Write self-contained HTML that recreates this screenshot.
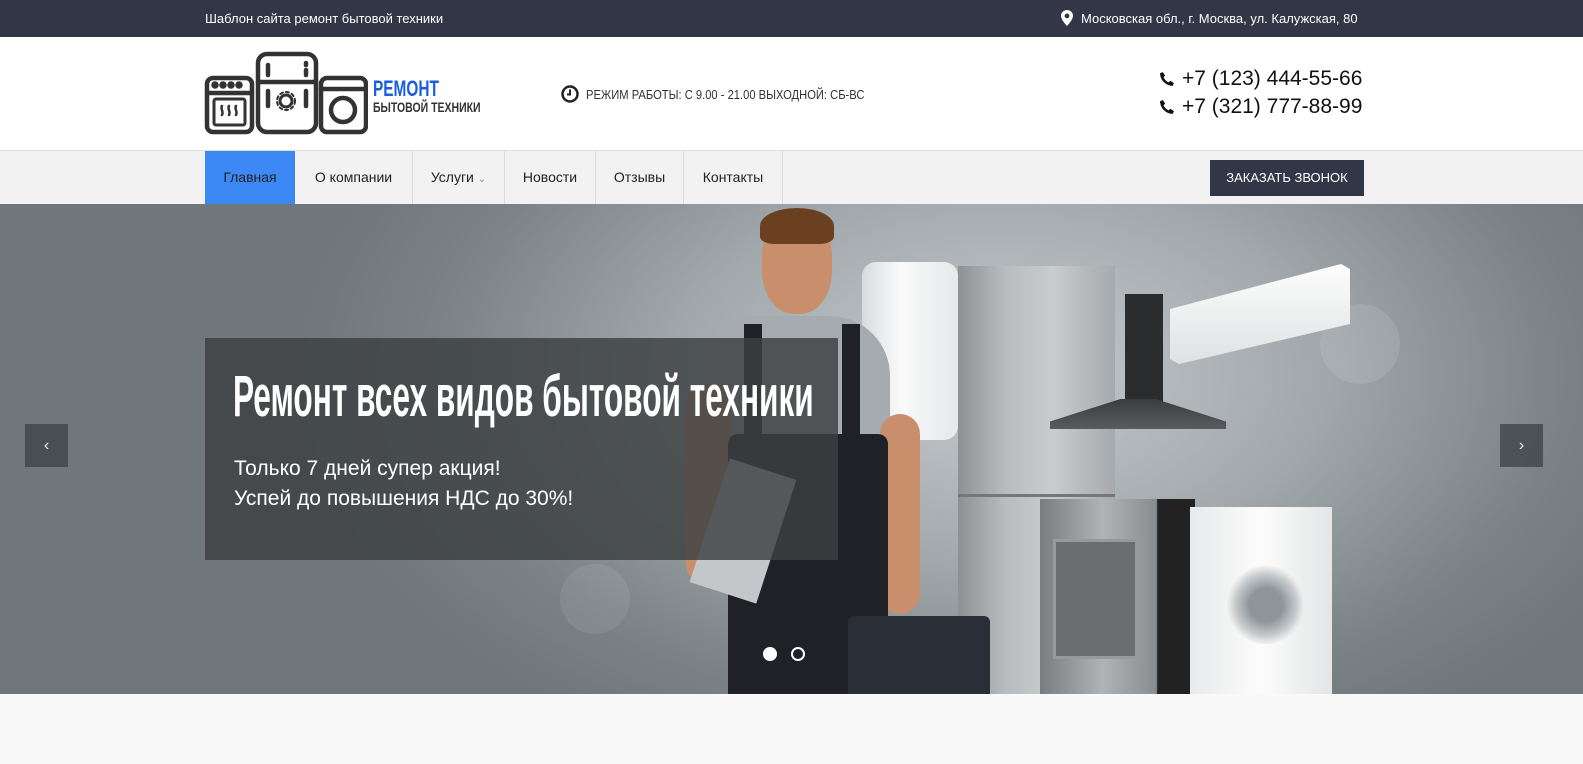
<!DOCTYPE html>
<html><head><meta charset="utf-8"><style>
*{margin:0;padding:0;box-sizing:border-box}
body{width:1583px;height:764px;overflow:hidden;background:#f9f9f9;font-family:"Liberation Sans","DejaVu Sans",sans-serif;position:relative}
.abs{position:absolute}
.top{left:0;top:0;width:1583px;height:37px;background:#333646;color:#fff;font-size:13px}
.hdr{left:0;top:37px;width:1583px;height:113px;background:#fff}
.nav{left:0;top:150px;width:1583px;height:54px;background:#f2f2f2;border-top:1px solid #ddd}
.nav a{position:absolute;top:0;height:53px;line-height:53px;font-size:14px;color:#222;text-align:center;border-right:1px solid #ddd}
.hero{left:0;top:204px;width:1583px;height:490px;overflow:hidden;background:radial-gradient(ellipse 700px 420px at 1000px 170px,#c5cacd 0%,#a2a9ad 45%,#7b8387 80%,#6f777b 100%)}
.cond{display:inline-block;transform:scaleX(.72);transform-origin:left center;white-space:nowrap}
</style></head><body>
<div class="abs top">
<div class="abs" style="left:205px;top:11px">Шаблон сайта ремонт бытовой техники</div>
<svg class="abs" style="left:1061px;top:10px" width="12" height="16" viewBox="0 0 12 16"><path d="M6 0C2.7 0 0 2.6 0 5.8 0 10 6 16 6 16s6-6 6-10.2C12 2.6 9.3 0 6 0zm0 8.3a2.4 2.4 0 110-4.8 2.4 2.4 0 010 4.8z" fill="#fff"/></svg>
<div class="abs" style="left:1081px;top:11px">Московская обл., г. Москва, ул. Калужская, 80</div>
</div>
<div class="abs hdr">
<svg class="abs" style="left:204px;top:14px" width="164" height="84" viewBox="0 0 164 84" fill="none" stroke="#333" stroke-width="4.5" stroke-linecap="round">
<rect x="3" y="27" width="45" height="54" rx="6"/><line x1="3" y1="42" x2="48" y2="42"/>
<circle cx="11" cy="34" r="1.5" fill="#333"/><circle cx="19" cy="34" r="1.5" fill="#333"/><circle cx="27" cy="34" r="1.5" fill="#333"/><circle cx="35" cy="34" r="1.5" fill="#333"/>
<rect x="10" y="48" width="31" height="26" rx="2" stroke-width="3"/>
<path d="M18 55c-2 3 2 5 0 9M25 55c-2 3 2 5 0 9M32 55c-2 3 2 5 0 9" stroke-width="2.5"/>
<rect x="54" y="3" width="58" height="78" rx="9"/><line x1="54" y1="31" x2="112" y2="31"/>
<line x1="64" y1="14" x2="64" y2="24"/><line x1="102" y1="12" x2="102" y2="14"/><line x1="102" y1="19" x2="102" y2="24"/><line x1="64" y1="40" x2="64" y2="55"/><line x1="102" y1="40" x2="102" y2="55"/>
<circle cx="82" cy="50" r="6" stroke-width="3"/><circle cx="82" cy="50" r="9" stroke-width="2" stroke-dasharray="3 3"/>
<rect x="117" y="27" width="45" height="54" rx="6"/><line x1="117" y1="38" x2="162" y2="38"/>
<circle cx="139" cy="59" r="12"/>
</svg>
<div class="abs" style="left:373px;top:39px;color:#1a5ee0;font-size:22px;font-weight:bold"><span class="cond" style="transform:scaleX(.7)">РЕМОНТ</span></div>
<div class="abs" style="left:373px;top:62px;color:#333;font-size:14px"><span class="cond" style="transform:scaleX(.75);font-weight:bold">БЫТОВОЙ ТЕХНИКИ</span></div>
<svg class="abs" style="left:561px;top:48px" width="18" height="18" viewBox="0 0 18 18"><circle cx="9" cy="9" r="7.5" fill="none" stroke="#222" stroke-width="2.5"/><path d="M9 4.5V9.5H6" stroke="#222" stroke-width="2" fill="none"/></svg>
<div class="abs" style="left:586px;top:50px;font-size:13px;color:#333"><span class="cond" style="transform:scaleX(.86)">РЕЖИМ РАБОТЫ: С 9.00 - 21.00 ВЫХОДНОЙ: СБ-ВС</span></div>
<svg class="abs" style="left:1159px;top:34px" width="17" height="17" viewBox="0 0 16 16"><path d="M3.6 1l2.2 3.3-1.5 1.6c.9 2.1 2.6 3.9 4.8 4.8l1.6-1.5L14 11.4l-1 2.6c-6.5 0-12-5.5-12-12z" fill="#111"/></svg>
<svg class="abs" style="left:1159px;top:62px" width="17" height="17" viewBox="0 0 16 16"><path d="M3.6 1l2.2 3.3-1.5 1.6c.9 2.1 2.6 3.9 4.8 4.8l1.6-1.5L14 11.4l-1 2.6c-6.5 0-12-5.5-12-12z" fill="#111"/></svg>
<div class="abs" style="left:1182px;top:30px;font-size:21px;color:#111">+7 (123) 444-55-66</div>
<div class="abs" style="left:1182px;top:58px;font-size:21px;color:#111">+7 (321) 777-88-99</div>
</div>
<div class="abs nav">
<a style="left:205px;width:90px;background:#3c89f5;border:none;color:#222">Главная</a>
<a style="left:295px;width:118px">О компании</a>
<a style="left:413px;width:92px">Услуги <span style="font-size:10px;color:#888">&#8964;</span></a>
<a style="left:505px;width:91px">Новости</a>
<a style="left:596px;width:88px">Отзывы</a>
<a style="left:684px;width:99px">Контакты</a>
<div class="abs" style="left:1210px;top:9px;width:154px;height:36px;background:#333646;color:#fff;font-size:13px;line-height:36px;text-align:center">ЗАКАЗАТЬ ЗВОНОК</div>
</div>
<div class="abs hero">
<div class="abs" style="left:560px;top:360px;width:70px;height:70px;border-radius:50%;background:rgba(255,255,255,.08)"></div>
<div class="abs" style="left:1320px;top:100px;width:80px;height:80px;border-radius:50%;background:rgba(255,255,255,.1)"></div>
<div class="abs" style="left:862px;top:58px;width:96px;height:178px;border-radius:14px;background:linear-gradient(90deg,#d8dbdd,#fafafa 40%,#e6e8e9)"></div>
<div class="abs" style="left:958px;top:62px;width:157px;height:428px;background:linear-gradient(90deg,#8d9194,#b8bcbe 30%,#c9cccd 60%,#a6aaac)"></div>
<div class="abs" style="left:958px;top:290px;width:157px;height:3px;background:#777"></div>
<div class="abs" style="left:1125px;top:90px;width:38px;height:110px;background:#2a2c2e"></div>
<div class="abs" style="left:1050px;top:195px;width:176px;height:30px;background:linear-gradient(#3a3c3e,#595c5e);clip-path:polygon(40% 0,60% 0,100% 75%,100% 100%,0 100%,0 75%)"></div>
<div class="abs" style="left:1170px;top:60px;width:180px;height:100px;background:linear-gradient(#fdfdfd,#dfe1e2);clip-path:polygon(0 45%,95% 0,100% 5%,100% 60%,5% 100%,0 95%)"></div>
<div class="abs" style="left:1040px;top:295px;width:155px;height:195px;background:linear-gradient(90deg,#7a7d80,#b0b3b5 40%,#8a8d8f 75%,#222 76%)"></div>
<div class="abs" style="left:1053px;top:335px;width:85px;height:120px;background:#6b6e71;border:3px solid #999"></div>
<div class="abs" style="left:1190px;top:303px;width:142px;height:187px;background:linear-gradient(90deg,#e8e9ea,#fcfcfc 50%,#e4e5e6)"></div>
<div class="abs" style="left:1227px;top:362px;width:78px;height:78px;border-radius:50%;background:radial-gradient(circle,#8e9599 30%,#c5c9cc 55%,#f0f0f0 70%,#c8cacb 72%)"></div>
<div class="abs" style="left:762px;top:14px;width:70px;height:96px;border-radius:40% 40% 45% 45%;background:#c98f6c"></div>
<div class="abs" style="left:760px;top:4px;width:74px;height:36px;border-radius:50% 50% 20% 20%;background:#6a4020"></div>
<div class="abs" style="left:700px;top:112px;width:190px;height:140px;border-radius:60px 60px 10px 10px;background:#a5abaf"></div>
<div class="abs" style="left:686px;top:180px;width:45px;height:200px;border-radius:20px;background:#c98f6c"></div>
<div class="abs" style="left:880px;top:210px;width:40px;height:200px;border-radius:20px;background:#c98f6c"></div>
<div class="abs" style="left:728px;top:230px;width:160px;height:260px;background:#1f2126;border-radius:10px 10px 0 0"></div>
<div class="abs" style="left:744px;top:120px;width:18px;height:115px;background:#1f2126"></div>
<div class="abs" style="left:842px;top:120px;width:18px;height:115px;background:#1f2126"></div>
<div class="abs" style="left:708px;top:262px;width:70px;height:130px;background:#c4c7c9;transform:rotate(18deg)"></div>
<div class="abs" style="left:848px;top:412px;width:142px;height:78px;background:#2a2e36;border-radius:6px 6px 0 0"></div>
<div class="abs" style="left:205px;top:134px;width:633px;height:222px;background:rgba(60,64,66,.82)"></div>
<div class="abs" style="left:233px;top:160px;color:#fff;font-size:58px;line-height:66px;font-weight:bold"><span class="cond" style="transform:scaleX(.545)">Ремонт всех видов бытовой техники</span></div>
<div class="abs" style="left:234px;top:250px;color:#fff;font-size:21px;line-height:30px">Только 7 дней супер акция!<br>Успей до повышения НДС до 30%!</div>
<div class="abs" style="left:25px;top:220px;width:43px;height:43px;background:rgba(60,64,70,.75);color:#fff;text-align:center;line-height:43px;font-size:16px">&#8249;</div>
<div class="abs" style="left:1500px;top:220px;width:43px;height:43px;background:rgba(60,64,70,.75);color:#fff;text-align:center;line-height:43px;font-size:16px">&#8250;</div>
<div class="abs" style="left:763px;top:443px;width:14px;height:14px;border-radius:50%;background:#fff"></div>
<div class="abs" style="left:791px;top:443px;width:14px;height:14px;border-radius:50%;border:2px solid #fff"></div>
</div>
</body></html>
